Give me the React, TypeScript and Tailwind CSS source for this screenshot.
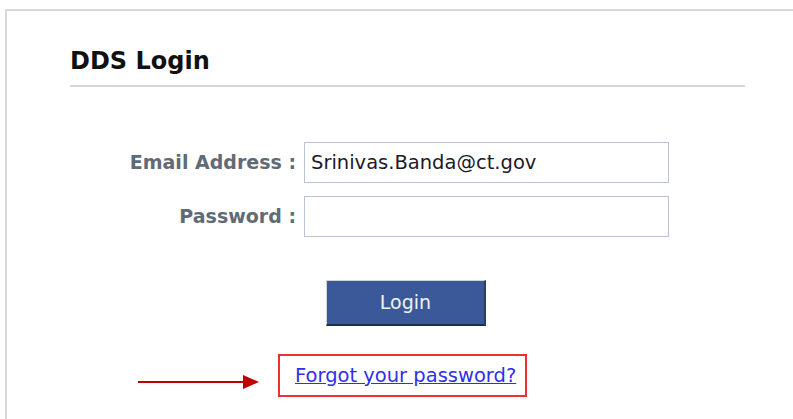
import React from "react";

const font = { fontFamily: '"DejaVu Sans", Tahoma, Verdana, sans-serif' };

function Field({ label, value, type = "text" }: { label: string; value?: string; type?: string }) {
  return (
    <div className="flex items-center">
      <label className="w-[238px] pr-[8px] text-right text-[19px] font-bold text-[#5f6b77]">
        {label}
      </label>
      <input
        type={type}
        defaultValue={value}
        className="h-[41px] w-[365px] border border-[#b9c3d6] bg-white px-[6px] text-[19.5px] text-[#1a1a2a] outline-none"
      />
    </div>
  );
}

export default function App() {
  return (
    <div className="h-[419px] overflow-hidden bg-white" style={font}>
      <div className="ml-[5px] mt-[9px] h-[600px] w-[900px] border-l-2 border-t-2 border-[#d9d9d9]">
        {/* heading + rule */}
        <div className="ml-[63px] w-[675px] pt-[36px]">
          <h1 className="text-[24px] font-bold leading-[28px] text-[#111]">DDS Login</h1>
          <div className="mt-[10px] h-[2px] bg-[#d6d6d6]" />
        </div>

        {/* credentials */}
        <div className="mt-[55px] flex flex-col gap-[13px] pl-[59px]">
          <Field label="Email Address :" value="Srinivas.Banda@ct.gov" />
          <Field label="Password :" type="password" />
        </div>

        <div className="mt-[43px] pl-[319px]">
          <button
            type="button"
            className="h-[46px] w-[160px] border-b-2 border-l border-r-2 border-t border-b-[#1c2c55] border-l-[#d0d4dc] border-r-[#2a3d6e] border-t-[#d0d4dc] bg-[#3b5998] text-[19px] text-[#f2f2f2]"
          >
            Login
          </button>
        </div>

        {/* forgot link, called out with an arrow */}
        <div className="mt-[28px] flex items-center pl-[131px]">
          <svg width="121" height="16" viewBox="0 0 121 16" className="mt-[12px]">
            <path d="M0 8H106" stroke="#c00000" strokeWidth="2" />
            <path d="M105 1L121 8L105 15Z" fill="#c00000" />
          </svg>
          <div className="ml-[19px] flex h-[43px] w-[249px] items-center border-2 border-[#f03030] pl-[15px]">
            <a href="#" className="text-[19.5px] leading-none text-[#3030e8] underline">
              Forgot your password?
            </a>
          </div>
        </div>
      </div>
    </div>
  );
}
